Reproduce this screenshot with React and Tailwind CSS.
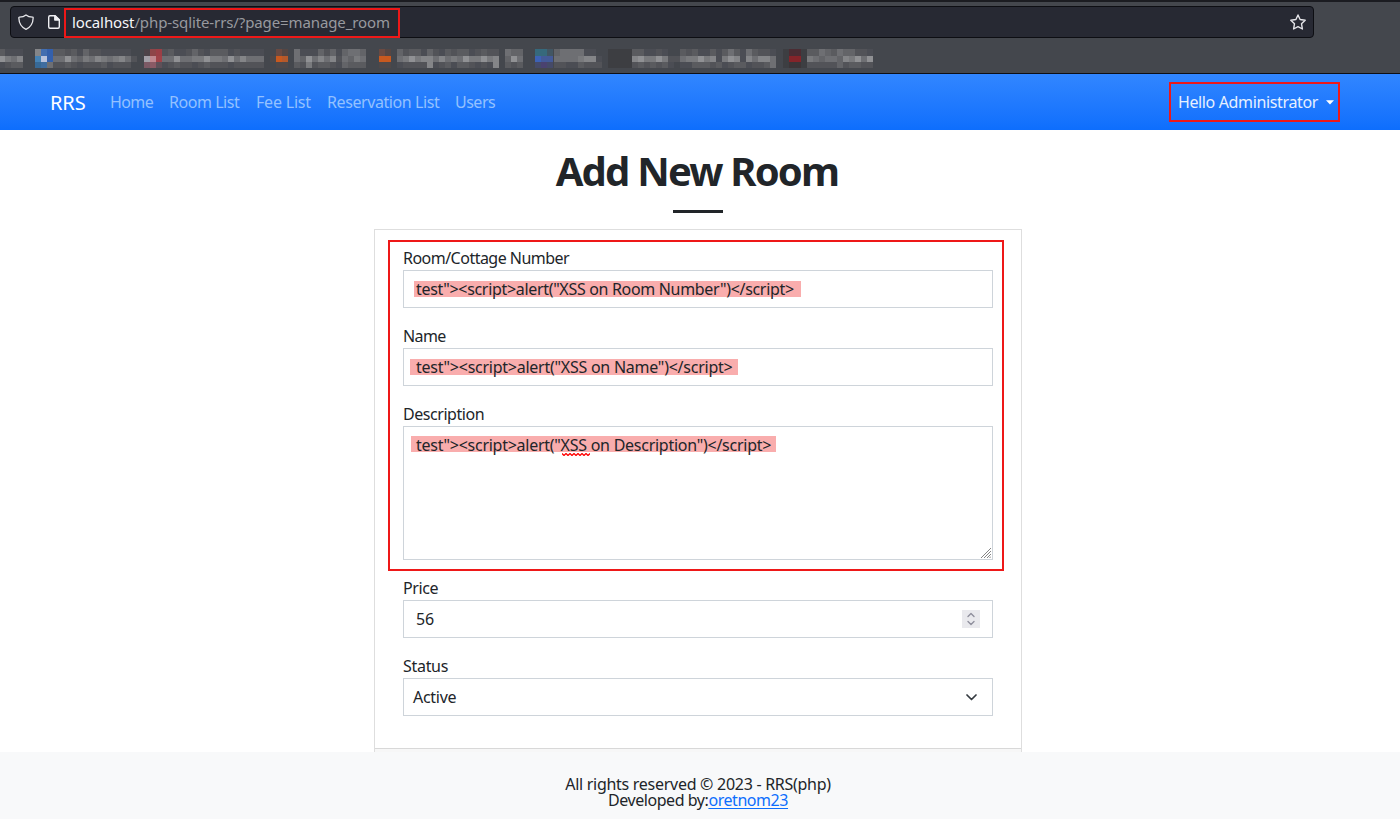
const SHADES = {
  1: '#4b4d54', 2: '#525358', 3: '#5a5b5f', 4: '#636468', 5: '#6e6f73', 6: '#797a7d', 7: '#848588', 8: '#909194', 9: '#3d3e42',
  a: '#436eb0', b: '#3460ac', c: '#4682b4', d: '#b9c3dd', e: '#376996', f: '#3f6da0',
  g: '#4d4349', h: '#8e4548', i: '#9b3f46', j: '#a3a0a8', k: '#c0888f', l: '#a04248', m: '#7b5965', n: '#8a5a65', o: '#5f5058',
  p: '#6a4a42', q: '#554643', r: '#c8591f', s: '#b5592b', t: '#4e4849',
  u: '#36697c', v: '#425663', w: '#3d62b5', x: '#445a98', y: '#454a68', z: '#4a4270',
  A: '#4b2c33', B: '#85242a', C: '#3c3538',
};

const MOSAIC = [
  [-1, ['3111', '8657', '1233']],
  [35, ['7ab33231422111110', 'cdb55854657656752', 'ef522321222312220']],
  [144, ['ghi23112421333121111', 'jkl55855668665857555', 'mno12322123222122222']],
  [270, ['0pq', 'trs', '0tt']],
  [294, ['511142414554', '548575725465', '326233214333']],
  [379, ['pq', 'rr', 'tt']],
  [397, ['423314213233123220544', '568677575658668670485', '122227123133212170323']],
  [535, ['uuv', 'wxx', 'yzy']],
  [554, ['45555110', '55556771', '22113222']],
  [608, ['9999331121003231131353153221', '9999786686225668671687175775', '9999232323101133323123312235']],
  [783, ['9AA933543544221', '9BB965455476858', '9CC922222423322']],
];

const ROW_Y = [49, 56, 62];
const ROW_H = [7, 6, 6];

function Bookmarks() {
  return (
    <svg width="880" height="35" viewBox="0 38 880 35" shapeRendering="crispEdges" aria-hidden="true">
      {MOSAIC.map(([x0, rows]) =>
        rows.map((row, r) =>
          [...row].map((ch, i) =>
            ch === '0' ? null : (
              <rect key={`${x0}-${r}-${i}`} x={x0 + i * 6} y={ROW_Y[r]} width="6" height={ROW_H[r]} fill={SHADES[ch]} />
            ),
          ),
        ),
      )}
    </svg>
  );
}

function Browser() {
  return (
    <div className="flex h-[74px] flex-col border-b border-[#0e0f14] bg-[#44474d]">
      <div className="h-[2px] shrink-0 bg-[#1b1c21]" />
      <div className="mt-1 ml-[10px] flex h-8 w-[1304px] shrink-0 items-center rounded-[4px] border border-[#0d0e13] bg-[#272933]">
        <svg className="ml-[7px]" width="16" height="16" viewBox="0 0 16 16" fill="none" stroke="#e6e6ea" strokeWidth="1.3" strokeLinejoin="round">
          <path d="M8 .9C6.200 2.500 3.600 3.100 1.400 3.100c-.4 0-.6.3-.6.700C1 9 3.200 13.300 8 15.300c4.800-2 7-6.300 7.200-11.500 0-.4-.2-.7-.6-.7C12.400 3.100 9.800 2.500 8 .9z" />
        </svg>
        <svg className="ml-[12px]" width="16" height="16" viewBox="0 0 16 16" fill="none" stroke="#f0f0f3" strokeWidth="1.4" strokeLinejoin="round">
          <path d="M4 1.700h5.200l4.100 4.100v6.900c0 .9-.5 1.500-1.300 1.500H4c-.8 0-1.300-.6-1.300-1.500V3.200c0-.9.500-1.500 1.300-1.500z" />
          <path d="M8.800 1.700v4.400h4.500z" fill="#f0f0f3" />
        </svg>
        <div className="relative ml-[10px] h-[22px] text-[15px] leading-[22px] tracking-[-0.11px] whitespace-nowrap text-[#98999f]">
          <span className="text-[#f6f6fa]">localhost</span>/php-sqlite-rrs/?page=manage_room
          <div className="absolute -top-[3px] -left-[8px] h-[30px] w-[336px] border-2 border-[#ee1818]" />
        </div>
        <svg className="mr-[7px] ml-auto" width="16" height="16" viewBox="0 0 16 16" fill="none" stroke="#e6e6ea" strokeWidth="1.400" strokeLinejoin="round">
          <path d="M8 1l2.100 4.500 5.100.7-3.700 3.500.9 5.300L8 12.600 3.600 15l.9-5.300L.8 6.200l5.100-.7z" />
        </svg>
      </div>
      <Bookmarks />
    </div>
  );
}

function Navbar() {
  return (
    <nav className="flex h-14 items-center bg-linear-to-b from-[#3186ff] to-[#0d6efd] pl-[50px] text-[#93c1ff]">
      <span className="mt-px mr-[23px] w-9 text-[20px] tracking-[-0.1px] whitespace-nowrap text-white">RRS</span>
      <span className="w-[60px] pl-px tracking-[-0.6px]">Home</span>
      <span className="w-[87px] tracking-[-0.45px]">Room List</span>
      <span className="w-[71px] tracking-[-0.2px]">Fee List</span>
      <span className="w-[128px] tracking-[-0.42px]">Reservation List</span>
      <span className="tracking-[-0.5px]">Users</span>
      <span className="relative mr-[66px] ml-auto flex items-center gap-2 tracking-[-0.36px] text-[#e6f0ff]">
        Hello Administrator
        <svg width="8" height="5" viewBox="0 0 8 5" className="shrink-0">
          <path d="M0 .3h8L4 4.500z" fill="#fff" />
        </svg>
        <div className="absolute -top-[8px] -right-[6px] h-10 w-[171px] border-2 border-[#ee1818]" />
      </span>
    </nav>
  );
}

function Label({ className, children }) {
  return <div className={`h-6 leading-6 ${className}`}>{children}</div>;
}

function Payload({ highlight, className, children }) {
  return (
    <span className={`relative inline-block whitespace-nowrap ${className}`}>
      <span className={`absolute h-4 bg-[#f9adad] ${highlight}`} />
      <span className="relative">{children}</span>
    </span>
  );
}

const BOX = 'mb-4 border border-[#ced4da] px-3 py-[6px] leading-6 bg-white';

export default function App() {
  return (
    <div className="flex h-[819px] w-[1400px] flex-col overflow-hidden bg-white font-['Noto_Sans',sans-serif] text-base text-[#212529]">
      <Browser />
      <Navbar />
      <main className="flex min-h-0 w-[1396px] flex-1 flex-col items-center overflow-hidden">
        <h1 className="mt-[17px] -ml-[2px] text-[40px] leading-[48px] font-bold tracking-[-1.8px] whitespace-nowrap">Add New Room</h1>
        <div className="mt-[15px] h-[3px] w-[50px] shrink-0 bg-[#212529]" />
        <section className="mt-4 w-[648px] shrink-0 border border-[#dedede]">
          <div className="relative h-[518px] px-7 pt-4">
            <Label className="tracking-[-0.52px]">Room/Cottage Number</Label>
            <div className={`${BOX} h-[38px]`}>
              <Payload className="tracking-[-0.32px]" highlight="top-[4px] -left-[2px] w-[387px]">{'test"><script>alert("XSS on Room Number")</script>'}</Payload>
            </div>
            <Label className="tracking-[-0.6px]">Name</Label>
            <div className={`${BOX} h-[38px]`}>
              <Payload className="tracking-[-0.25px]" highlight="top-[4px] -left-[6px] w-[328px]">{'test"><script>alert("XSS on Name")</script>'}</Payload>
            </div>
            <Label className="tracking-[-0.45px]">Description</Label>
            <div className={`${BOX} relative h-[134px]`}>
              <Payload className="tracking-[-0.26px]" highlight="top-[3px] -left-[5px] w-[365px]">{'test"><script>alert("XSS on Description")</script>'}</Payload>
              <svg className="absolute top-[26px] left-[158px]" width="28" height="3" viewBox="0 0 28 3" fill="none" stroke="#f00" strokeWidth="1.300">
                <path d="M0 .5l2 2 2-2 2 2 2-2 2 2 2-2 2 2 2-2 2 2 2-2 2 2 2-2 2 2 2-2" />
              </svg>
              <svg className="absolute right-[1px] bottom-[1px]" width="10" height="10" viewBox="0 0 10 10" fill="none" stroke="#777" strokeWidth=".9">
                <path d="M0 10L10 0M3 10l7-7M6 10l4-4M8.500 10l1.500-1.500" />
              </svg>
            </div>
            <Label className="tracking-[-0.4px]">Price</Label>
            <div className={`${BOX} flex h-[38px] items-center justify-between`}>
              <span className="tracking-[-0.2px]">56</span>
              <svg width="18" height="18" viewBox="0 0 18 18" fill="none" stroke="#8f8f9d" strokeWidth="1.400" strokeLinecap="round" strokeLinejoin="round">
                <rect width="18" height="18" fill="#e9e9ed" stroke="none" />
                <path d="M6 6.500l3-3 3 3M6 11.500l3 3 3-3" />
              </svg>
            </div>
            <Label className="tracking-[-0.3px]">Status</Label>
            <div className="flex h-[38px] items-center justify-between border border-[#ced4da] pr-[15px] pl-[9px] leading-6 tracking-[-0.28px]">
              <span>Active</span>
              <svg width="11" height="7" viewBox="0 0 11 7" fill="none" stroke="#343a40" strokeWidth="1.700" strokeLinecap="round" strokeLinejoin="round">
                <path d="M1 1l4.500 4.500L10 1" />
              </svg>
            </div>
            <div className="absolute top-[10px] left-[13px] h-[331px] w-[616px] border-2 border-[#ee1818]" />
          </div>
          <div className="h-12 border-t border-[#d8d8d8] bg-[#f7f7f7]" />
        </section>
      </main>
      <footer className="h-[67px] shrink-0 bg-[#f8f9fa] pt-6 pr-1 text-center leading-4">
        <div className="tracking-[-0.28px]">All rights reserved © 2023 - RRS(php)</div>
        <div className="tracking-[-0.44px]">
          Developed by:<span className="text-[#0d6efd] underline decoration-1 underline-offset-2">oretnom23</span>
        </div>
      </footer>
    </div>
  );
}
